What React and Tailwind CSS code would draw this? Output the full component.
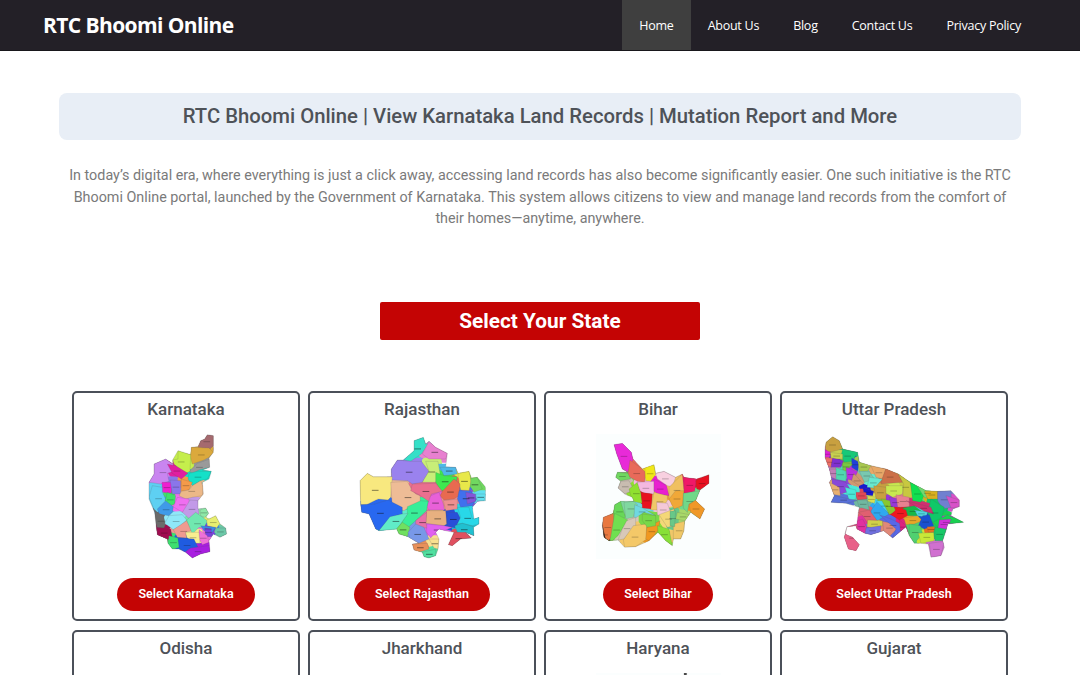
import React from "react";

const navLinks = ["Home", "About Us", "Blog", "Contact Us", "Privacy Policy"];

// map regions: [fill, points], points are in the coordinates of the viewBox
const karnataka = [
  ["#a56a6f", "440,152 458,155 458,185 448,195 412,190 420,170 432,165"],
  ["#dba93c", "392,190 445,192 458,205 445,220 430,228 395,240 388,215"],
  ["#9a9a9a", "385,262 410,238 447,225 446,250 415,258 395,268"],
  ["#c5ee4c", "352,200 390,212 388,262 372,270 340,240 336,228 352,225"],
  ["#c985f0", "280,240 315,225 337,240 340,262 320,268 325,292 300,300 265,295 280,270"],
  ["#e01fa0", "320,240 345,245 382,268 362,285 335,268"],
  ["#14e0c8", "385,268 410,262 452,262 440,285 420,290 395,305 382,285"],
  ["#ef1fd0", "304,295 335,295 332,328 305,325"],
  ["#8a76ea", "328,288 360,290 360,330 335,330"],
  ["#f49a4a", "362,285 395,295 385,318 362,322"],
  ["#ecb888", "395,305 420,290 428,310 425,335 395,340 375,345 355,335 362,322 385,318"],
  ["#5ed0f2", "275,305 305,310 305,325 315,345 315,368 290,385 280,375 265,340"],
  ["#3fe26a", "320,325 345,335 342,360 325,368 313,350"],
  ["#3f9ae8", "315,350 338,368 335,385 325,395 295,390 290,375"],
  ["#ef6ef0", "350,340 385,345 388,375 365,385 338,368"],
  ["#c29ae8", "388,348 412,350 415,390 390,408 365,385"],
  ["#6b6b6b", "283,382 308,395 315,420 310,432 288,430"],
  ["#8fe8f8", "325,395 365,392 378,408 360,425 338,437 312,418"],
  ["#a00c50", "288,432 310,432 330,435 336,465 310,468 290,452"],
  ["#ee9a90", "338,437 378,410 395,440 375,445 378,462 350,460"],
  ["#70e8b0", "378,408 405,385 440,410 430,432 415,430 395,450"],
  ["#8ee8a8", "418,378 435,372 444,388 432,400 420,395"],
  ["#e8ee70", "438,408 465,395 478,418 468,432 440,425"],
  ["#6cc8a8", "465,432 495,432 498,450 478,460 460,445"],
  ["#3a8ae8", "420,425 465,430 455,445 430,440"],
  ["#7a40e0", "432,432 452,435 452,458 435,458"],
  ["#ef70d8", "415,437 440,455 445,475 425,482 415,465"],
  ["#f8ee90", "375,445 415,445 418,478 400,478 378,460"],
  ["#3de070", "325,455 352,462 358,490 335,495 322,478"],
  ["#1f5be0", "352,462 400,465 412,490 385,495 372,505 355,490"],
  ["#a81ee0", "375,505 390,492 445,485 448,503 420,510 395,522"],
];

const rajasthan = [
  ["#35e0c8", "340,170 368,160 375,180 385,178 362,210 330,232 308,228 340,200"],
  ["#e880d0", "385,172 405,190 440,208 435,225 385,225 365,210"],
  ["#9a82ee", "290,228 330,232 362,232 385,262 365,295 335,300 320,290 270,288 272,255"],
  ["#c8ee78", "375,232 412,232 418,268 405,295 365,295 385,262"],
  ["#4fb8e8", "418,250 465,250 470,270 430,275"],
  ["#3fe84f", "405,265 430,275 470,278 465,300 440,320 420,320 405,295"],
  ["#e8e84a", "472,268 505,262 512,290 505,320 480,318 475,295"],
  ["#70d860", "510,282 530,280 545,315 520,325 510,310"],
  ["#f8e87f", "178,290 200,268 218,278 275,278 270,340 262,348 232,345 198,362 180,362"],
  ["#eebc96", "270,295 320,292 335,320 345,330 358,335 360,375 325,370 310,380 275,370"],
  ["#ea6f8f", "335,300 405,298 425,322 392,330 388,355 355,332 330,320"],
  ["#e86a50", "425,322 460,285 478,300 475,335 460,345 430,348 418,335"],
  ["#4070ee", "475,320 510,320 528,345 515,365 480,370 470,345"],
  ["#8555d8", "495,325 525,330 525,352 500,360"],
  ["#60e0f0", "525,330 555,330 550,350 530,350"],
  ["#e860d8", "390,335 415,325 428,360 432,378 385,378 378,368"],
  ["#ee9090", "428,350 470,345 470,375 435,380"],
  ["#2868f0", "180,362 222,360 262,348 305,370 305,390 270,400 235,440 225,435 205,390 183,385"],
  ["#38ee98", "320,368 360,350 382,352 378,380 345,410 325,428 300,420 320,390"],
  ["#60ecc8", "268,398 305,390 322,388 300,420 285,438 235,440"],
  ["#70e060", "305,415 328,430 320,458 295,450 288,435"],
  ["#e8b080", "378,380 435,380 438,420 430,425 375,418"],
  ["#e870a8", "345,410 378,385 376,420 385,432 345,432"],
  ["#7898e8", "345,420 370,430 385,465 355,478 330,470 322,445"],
  ["#e060f0", "378,420 430,425 455,430 430,440 405,445 390,462 378,445"],
  ["#2850d8", "438,385 470,385 480,405 462,432 440,425"],
  ["#28d8e8", "470,370 505,370 515,405 535,400 535,420 515,425 485,418 470,420 480,400"],
  ["#20c0d0", "462,425 485,418 518,428 520,455 490,452 470,445"],
  ["#e05060", "462,445 495,445 512,462 480,465 455,485 443,482"],
  ["#e8905a", "335,480 380,478 385,495 355,505 340,498"],
  ["#f8e090", "385,465 415,465 412,495 400,492"],
  ["#50e0a0", "365,505 405,495 405,515 385,522 370,518"],
];

const bihar = [
  ["#e82ad8", "220,182 245,178 272,205 277,225 262,265 245,255 228,210"],
  ["#e86a5a", "268,228 305,255 315,265 312,295 290,292 265,278 262,268"],
  ["#f0e818", "312,250 340,242 345,272 330,292 315,290"],
  ["#70d860", "230,265 262,268 270,285 240,290 225,280"],
  ["#c8bcb0", "240,292 265,290 280,318 252,330 232,312"],
  ["#90e030", "265,315 290,295 300,325 305,358 275,352"],
  ["#f4b8e0", "290,295 340,292 340,330 310,328 298,320"],
  ["#f8d0e0", "345,268 370,262 405,280 395,308 380,305 350,285"],
  ["#e820d0", "340,285 378,305 385,335 350,330 340,322"],
  ["#e81020", "302,325 335,330 332,375 305,372"],
  ["#f0c868", "340,325 380,335 380,350 360,378 330,378"],
  ["#f0c060", "385,310 425,270 430,320 420,352 385,345"],
  ["#f0a838", "405,320 430,320 425,365 400,375 385,345"],
  ["#f01868", "430,280 468,285 462,322 430,330"],
  ["#e81020", "465,290 505,272 505,298 478,318 468,315"],
  ["#70d888", "428,328 478,320 465,350 445,360 440,385 428,372"],
  ["#f09828", "445,362 465,348 492,375 478,405 450,385"],
  ["#68d858", "222,362 240,352 250,385 255,400 235,418 218,385"],
  ["#80d8a0", "250,355 280,352 290,362 278,400 255,405"],
  ["#70d8e0", "282,362 305,372 345,395 310,385 280,405"],
  ["#f4c8d8", "348,355 380,358 390,385 370,400 350,392"],
  ["#e87840", "188,400 218,388 222,440 205,470 190,460 185,425"],
  ["#70e050", "222,388 262,408 232,455 215,470 208,470"],
  ["#d8c8b8", "258,410 285,400 285,425 250,465 232,468 245,435"],
  ["#f4c868", "278,425 318,420 318,465 285,488 252,490 248,468"],
  ["#f09820", "318,430 358,410 352,440 325,470 315,465"],
  ["#88e038", "350,425 385,435 395,485 375,470 352,445"],
  ["#f0c868", "398,420 432,412 430,440 420,465 398,465"],
  ["#a8d868", "410,385 462,395 432,410 405,405"],
  ["#f4d878", "355,392 400,375 400,425 380,430"],
  ["#68c888", "388,382 405,380 402,428 388,425"],
  ["#78d848", "305,390 345,395 345,425 320,430 305,410"],
  ["#111111", "186,425 190,458 198,470 193,458"],
];

const uttarPradesh = [
  ["#c8a040", "175,158 195,170 205,195 165,205 152,195 155,175"],
  ["#e020d8", "152,198 170,205 165,220 152,220"],
  ["#18c878", "205,195 250,205 235,232 210,235 200,215"],
  ["#c8d050", "168,205 205,210 205,225 170,225"],
  ["#ee7068", "152,222 175,222 170,250 158,245"],
  ["#8030d0", "175,222 208,230 200,250 170,250"],
  ["#2040d8", "232,222 255,235 250,262 232,250"],
  ["#78c840", "205,235 235,240 215,262 205,258"],
  ["#b830e0", "215,250 250,262 238,290 218,285"],
  ["#a8c850", "250,228 290,245 280,262 255,262"],
  ["#50d8b0", "185,250 215,262 215,292 180,285"],
  ["#c080b8", "165,255 185,255 185,285 170,280"],
  ["#78c8b0", "255,262 285,262 300,285 270,295"],
  ["#e8a868", "290,245 335,255 325,285 305,280"],
  ["#8848d8", "172,285 215,295 230,320 200,330 175,310"],
  ["#e8b070", "165,295 195,310 198,335 170,330"],
  ["#d09870", "238,268 268,300 255,305 232,290"],
  ["#68e8d0", "285,280 325,285 300,312 278,310"],
  ["#cc7048", "335,252 372,270 385,295 320,300 325,280"],
  ["#c8e850", "335,305 385,305 385,330 355,340 330,325"],
  ["#c8c840", "372,270 408,295 418,340 385,345 388,300"],
  ["#10e050", "408,295 455,320 440,355 415,350"],
  ["#70d870", "428,305 490,322 470,345 450,340"],
  ["#d8b020", "450,322 490,320 490,345 460,345"],
  ["#7080d0", "490,322 530,320 532,370 505,375 490,350"],
  ["#d850c8", "515,335 555,348 555,368 530,372"],
  ["#10c868", "470,345 510,370 500,415 470,420 460,385"],
  ["#1818d0", "265,310 298,322 295,335 270,332"],
  ["#e04858", "240,325 275,325 278,345 250,348"],
  ["#48e8d8", "212,310 245,318 245,345 225,350"],
  ["#c8a040", "298,305 335,310 335,345 305,345"],
  ["#d8e050", "280,335 305,340 300,358 280,352"],
  ["#5870d8", "180,335 225,345 250,350 215,358 170,355"],
  ["#70b8a0", "248,348 278,348 285,378 255,370"],
  ["#30a8f0", "290,380 310,350 345,390 305,412 290,402"],
  ["#40d8f0", "305,350 340,385 355,380 325,350"],
  ["#88c830", "320,345 350,350 365,382 345,392"],
  ["#9838d8", "345,340 380,345 380,370 350,368"],
  ["#e88090", "365,332 405,340 405,368 370,370"],
  ["#18b848", "385,372 420,365 445,385 430,395 400,395"],
  ["#f01820", "350,392 372,370 395,378 400,395 375,408"],
  ["#e8a828", "388,402 430,395 445,410 420,420 395,422"],
  ["#d03070", "395,350 470,370 478,390 450,382"],
  ["#50d8e0", "420,378 460,385 455,400 430,395"],
  ["#1850d0", "445,395 465,392 478,425 450,435 432,425"],
  ["#18d050", "475,415 520,392 568,415 520,420 495,435"],
  ["#d030d8", "495,408 530,405 520,435 490,438"],
  ["#e06070", "252,385 285,378 310,412 280,418 265,395"],
  ["#d0d048", "280,408 325,410 325,425 295,432 278,428"],
  ["#e030a0", "245,412 265,405 280,435 270,452 248,435"],
  ["#7070e0", "275,432 320,425 318,445 290,452 272,448"],
  ["#e08878", "325,412 360,420 370,432 345,458 328,440"],
  ["#5868e8", "315,392 350,405 395,428 355,462 365,435"],
  ["#e02080", "375,408 395,425 402,445 378,440"],
  ["#50d070", "405,420 438,425 445,450 420,478 405,455"],
  ["#c8e838", "432,448 478,445 480,470 440,478"],
  ["#e87020", "458,428 482,428 478,445 462,445"],
  ["#18c868", "482,430 515,435 505,470 482,470"],
  ["#d070d0", "465,478 510,472 500,515 470,520"],
  ["#e86088", "212,430 248,422 250,445 258,482 245,502 222,497 208,460"],
];

const states = [
  {
    name: "Karnataka",
    box: "190 150 375 375",
    regions: karnataka,
    outline:
      "440,152 458,155 458,190 458,205 445,222 447,250 425,258 452,262 445,285 425,295 428,330 412,350 412,375 435,372 444,388 435,400 445,405 465,395 478,420 495,432 498,450 478,460 458,450 445,470 448,503 420,510 395,522 375,505 355,495 335,495 322,478 320,465 290,452 287,430 282,385 265,345 265,295 280,270 280,240 315,225 337,240 336,228 352,200 390,212 392,190 412,188 420,170 432,165",
  },
  {
    name: "Rajasthan",
    box: "175 150 381 375",
    regions: rajasthan,
    labels: 0.6,
    outline:
      "368,160 375,180 385,172 405,190 440,208 435,248 465,250 472,268 505,262 512,282 530,280 555,310 555,350 530,352 515,370 520,405 535,400 535,420 518,430 520,455 495,445 512,462 480,465 455,485 443,482 460,445 435,440 415,435 405,445 415,465 412,495 405,515 385,522 370,518 365,505 340,498 335,480 355,478 322,458 295,450 288,435 235,440 225,435 205,390 183,385 180,362 178,290 200,268 218,278 272,278 272,255 290,228 308,228 340,200 340,170",
  },
  {
    name: "Bihar",
    box: "166 150 375 375",
    regions: bihar,
    tint: true,
    outline:
      "220,182 245,178 272,205 277,225 305,255 340,242 345,268 370,262 405,280 425,270 430,280 468,285 505,272 505,298 478,318 465,350 492,375 478,405 450,385 440,400 432,412 430,440 420,465 398,465 395,485 375,470 352,445 325,470 285,488 252,490 232,468 205,470 190,460 185,425 188,400 218,388 222,362 240,352 280,352 275,340 252,330 232,312 240,292 225,280 230,265 262,265 245,255 228,210",
  },
  {
    name: "Uttar Pradesh",
    box: "140 150 437 375",
    regions: uttarPradesh,
    outline:
      "175,158 195,170 205,195 250,205 255,235 290,245 335,255 372,270 408,295 455,320 490,322 530,320 555,348 555,368 535,375 530,395 568,415 520,420 515,440 505,470 510,490 500,515 470,520 462,480 440,478 420,478 405,455 395,428 355,462 328,440 290,452 272,448 248,435 245,425 218,428 212,450 235,460 255,482 245,500 222,495 210,460 218,428 248,420 252,385 255,370 215,358 170,355 180,335 165,295 172,285 165,255 152,220 152,195 155,175",
  },
  { name: "Odisha" },
  { name: "Jharkhand" },
  {
    name: "Haryana",
    box: "166 150 375 375",
    tint: true,
    labels: 0,
    regions: [["#444444", "433,150 435,150 435,156 433,156"]],
    outline: "430,150 438,150 438,160 430,160",
  },
  { name: "Gujarat" },
];

// centre of a region, used for the small district labels
const centreOf = (points) => {
  const pairs = points.split(" ").map((p) => p.split(",").map(Number));
  const x = pairs.reduce((sum, p) => sum + p[0], 0) / pairs.length;
  const y = pairs.reduce((sum, p) => sum + p[1], 0) / pairs.length;
  return [x, y];
};

const StateMap = ({ name, box, regions, outline, tint, labels = 0.3 }) => {
  // url(#...) breaks on a space, so "Uttar Pradesh" needs a clean id
  const clipId = `outline-${name.replace(" ", "-")}`;
  return (
    <svg viewBox={box} className={`h-[125px] ${tint ? "bg-[#fbfefe]" : ""}`}>
      {regions && (
        <>
          <clipPath id={clipId}>
            <polygon points={outline} />
          </clipPath>
          <g clipPath={`url(#${clipId})`}>
            {regions.map(([fill, points], idx) => (
              <polygon key={idx} fill={fill} stroke={fill} strokeWidth="22" strokeLinejoin="round" points={points} />
            ))}
            {regions.map(([fill, points], idx) => (
              <polygon key={idx} fill={fill} stroke="#555555" strokeOpacity="0.35" strokeWidth="1.5" points={points} />
            ))}
            {regions.map(([, points], idx) => {
              const [x, y] = centreOf(points);
              return (
                <line key={idx} x1={x - 10} x2={x + 10} y1={y} y2={y} stroke="#111111" strokeWidth="2.5" strokeOpacity={labels} />
              );
            })}
          </g>
          <polygon points={outline} fill="none" stroke="#666666" strokeOpacity="0.5" strokeWidth="1.5" />
        </>
      )}
    </svg>
  );
};

const StateCard = ({ state }) => (
  <div className="flex h-[230px] flex-col items-center rounded-[5px] border-2 border-[#4b5059] bg-white">
    <h3 className="mt-[4px] text-[17px] leading-[24px] font-medium text-[#4e5258]">{state.name}</h3>
    <div className="mt-[13px] h-[125px]">
      <StateMap {...state} />
    </div>
    <button className="mt-[19px] h-[33px] rounded-full bg-[#c40404] px-[21px] text-[12.5px] font-semibold text-white">
      Select {state.name}
    </button>
  </div>
);

export default function App() {
  return (
    <div className="bg-white font-['Roboto',sans-serif]">
      {/* Header */}
      <header className="flex h-[51px] items-stretch justify-between border-b border-[#18171b] bg-[#232027] pr-[42px] pl-[43px] font-['Open_Sans',sans-serif]">
        <a className="mt-[2px] self-center text-[21px] font-bold tracking-[-0.6px] text-white">RTC Bhoomi Online</a>
        <nav className="flex">
          {navLinks.map((link) => (
            <a
              key={link}
              className={`flex items-center px-[17px] pt-[3px] text-[12.5px] tracking-[-0.25px] text-white ${
                link === "Home" ? "bg-[#3f3f3f]" : ""
              }`}
            >
              {link}
            </a>
          ))}
        </nav>
      </header>

      {/* Intro */}
      <div className="px-[59px] pt-[42px]">
        <h1 className="flex h-[47px] items-center justify-center rounded-lg bg-[#e8eef6] text-[20.3px] font-medium text-[#4e5258]">
          RTC Bhoomi Online | View Karnataka Land Records | Mutation Report and More
        </h1>
        <p className="mt-[25.4px] text-center text-[14.35px] leading-[21.4px] text-[#7a7a7a]">
          In today’s digital era, where everything is just a click away, accessing land records has also become
          significantly easier. One such initiative is the RTC Bhoomi Online portal, launched by the Government of
          Karnataka. This system allows citizens to view and manage land records from the comfort of their
          homes—anytime, anywhere.
        </p>
      </div>

      <div className="mt-[72px] flex justify-center">
        <h2 className="flex h-[38px] w-[320px] items-center justify-center rounded-[2px] bg-[#c40404] pt-[2px] text-[20.8px] font-bold text-white">
          Select Your State
        </h2>
      </div>

      {/* States */}
      <div className="mt-[51px] grid grid-cols-4 gap-x-[8px] gap-y-[9px] px-[72px]">
        {states.map((state) => (
          <StateCard key={state.name} state={state} />
        ))}
      </div>
    </div>
  );
}
